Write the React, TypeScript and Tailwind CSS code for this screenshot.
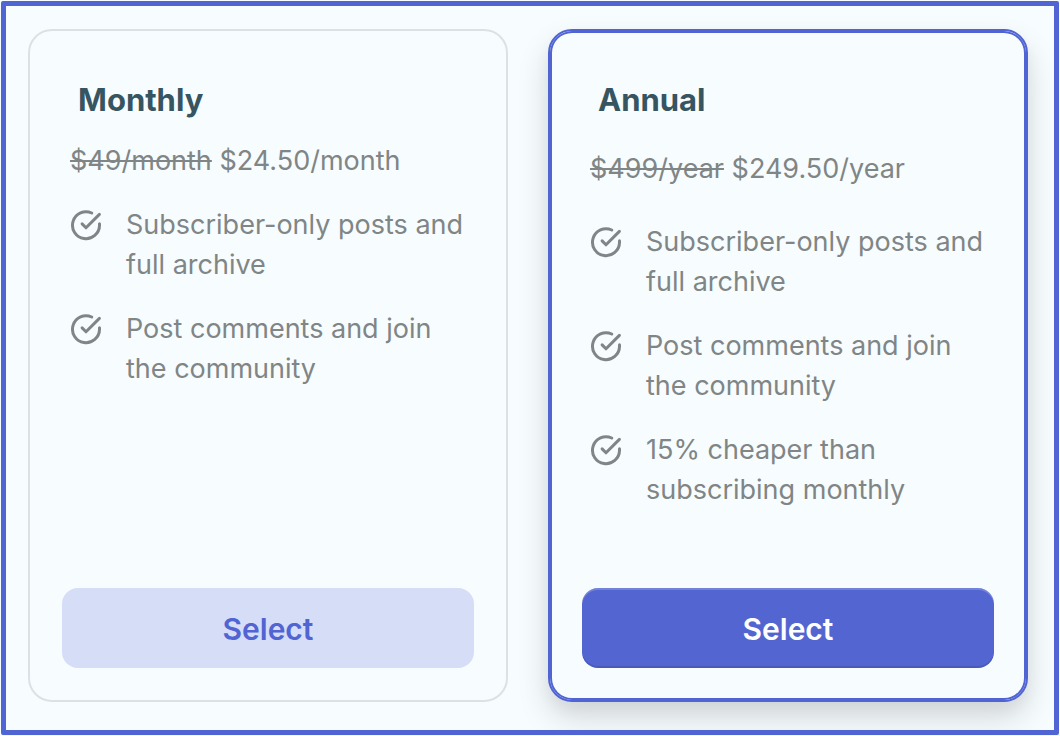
import React from 'react';

interface Plan {
  name: string;
  oldPrice: string;
  price: string;
  features: string[];
  highlighted: boolean;
}

const plans: Plan[] = [
  {
    name: 'Monthly',
    oldPrice: '$49/month',
    price: '$24.50/month',
    features: ['Subscriber-only posts and full archive', 'Post comments and join the community'],
    highlighted: false,
  },
  {
    name: 'Annual',
    oldPrice: '$499/year',
    price: '$249.50/year',
    features: [
      'Subscriber-only posts and full archive',
      'Post comments and join the community',
      '15% cheaper than subscribing monthly',
    ],
    highlighted: true,
  },
];

const CheckIcon: React.FC = () => (
  <svg
    className="mt-1 size-8 shrink-0"
    viewBox="0 0 32 32"
    fill="none"
    stroke="currentColor"
    strokeWidth="3"
    strokeLinecap="round"
    strokeLinejoin="round"
    aria-hidden="true"
  >
    <path d="M29.5 14.8V16.3A13.5 13.5 0 1 1 21.7 4" />
    <path d="M29.4 5.4 16 18.8l-3.9-3.9" />
  </svg>
);

const PlanCard: React.FC<{ plan: Plan }> = ({ plan }) => (
  <section
    className={
      plan.highlighted
        ? 'flex flex-col rounded-3xl border-2 border-[#5064d3] bg-[#f7fcff] p-8 pt-12 shadow-[inset_0_0_0_2px_#5064d3,0_16px_32px_rgba(0,0,0,0.14),0_8px_16px_rgba(0,0,0,0.04)]'
        : 'flex flex-col rounded-3xl border-2 border-[#dce1e5] p-8 pt-12'
    }
  >
    <h2 className="px-4 text-[31px] leading-[42px] font-bold text-[#365561]">{plan.name}</h2>
    <p className={plan.highlighted ? 'mt-7 px-2 text-[27px] leading-10' : 'mt-5 px-2 text-[27px] leading-10'}>
      <s>{plan.oldPrice}</s> {plan.price}
    </p>
    <ul className={plan.highlighted ? 'mt-[33px] flex flex-col gap-6 pl-2' : 'mt-6 flex flex-col gap-6 pl-2'}>
      {plan.features.map((feature) => (
        <li key={feature} className="flex gap-6">
          <CheckIcon />
          <span className="text-[27px] leading-10">{feature}</span>
        </li>
      ))}
    </ul>
    <button
      type="button"
      className={
        plan.highlighted
          ? 'mt-auto h-20 rounded-2xl bg-[#5265d1] pt-0.5 text-[30px] font-semibold text-white shadow-[inset_0_2px_0_rgba(255,255,255,0.2),inset_0_-2px_0_rgba(0,0,0,0.1)]'
          : 'mt-auto h-20 rounded-2xl bg-[#d6ddf7] pt-0.5 text-[30px] font-semibold text-[#5064d3]'
      }
    >
      Select
    </button>
  </section>
);

const App: React.FC = () => (
  <div className="flex min-h-screen bg-[#f7fcff] p-px font-['Inter',sans-serif] text-[#808585]">
    <main className="grid flex-1 grid-cols-2 gap-10 overflow-hidden rounded-xs border-5 border-[#5064d3] pt-[23px] pr-[26px] pb-7 pl-[22px]">
      {plans.map((plan) => (
        <PlanCard key={plan.name} plan={plan} />
      ))}
    </main>
  </div>
);

export default App;
